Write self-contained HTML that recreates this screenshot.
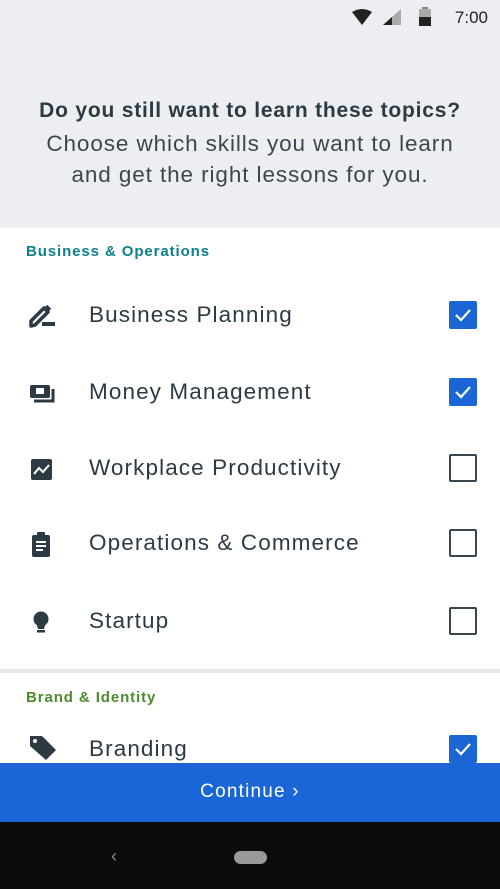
<!DOCTYPE html><html><head><style>
body{margin:0;width:500px;height:889px;overflow:hidden;font-family:"Liberation Sans",sans-serif;background:#fff;position:relative;color:#2c3a42}
.hdr{position:absolute;top:0;left:0;width:500px;height:228px;background:#eceef1}
.time{position:absolute;right:12px;top:8px;font-size:17px;color:#222}
.h1{position:absolute;top:99px;width:100%;text-align:center;font-size:21px;font-weight:bold;letter-spacing:.8px;white-space:nowrap}
.h2{position:absolute;top:128px;width:100%;text-align:center;font-size:22.5px;line-height:31px;color:#3b474e;letter-spacing:.9px;white-space:nowrap}
.sec{position:absolute;left:26px;font-size:15px;font-weight:bold;letter-spacing:.9px}
.row{position:absolute;left:0;width:500px;height:40px}
.row .t{position:absolute;left:89px;top:7px;font-size:22.5px;letter-spacing:1.1px}
.row svg.i{position:absolute;left:28px;top:9px}
.cb{position:absolute;left:449px;top:6px;width:28px;height:28px;box-sizing:border-box;border:2px solid #3a464d;border-radius:2px}
.cb.on{background:#1a66d4;border-color:#1a66d4}
.cb svg{position:absolute;left:2px;top:2px}
.cont{position:absolute;top:763px;left:0;width:500px;height:59px;background:#1b66d6;color:#fff;font-size:19px;text-align:center;line-height:58px;letter-spacing:1.2px}
.nav{position:absolute;top:822px;left:0;width:500px;height:67px;background:#0b0b0b}
</style></head><body>
<div class="hdr">
<svg style="position:absolute;left:352px;top:9px" width="20" height="16"><path d="M0 3Q10-3 20 3L10 16Z" fill="#222"/></svg>
<svg style="position:absolute;left:383px;top:9px" width="18" height="16"><path d="M18 0V16H0Z" fill="#aaa"/><path d="M9 8V16H0Z" fill="#222"/></svg>
<svg style="position:absolute;left:419px;top:7px" width="12" height="19"><rect x="3" y="0" width="6" height="3" fill="#888"/><rect y="2" width="12" height="17" fill="#aaa"/><rect y="10" width="12" height="9" fill="#222"/></svg>
<div class="time">7:00</div>
<div class="h1">Do you still want to learn these topics?</div>
<div class="h2">Choose which skills you want to learn<br>and get the right lessons for you.</div>
</div>
<div class="sec" style="top:243px;color:#0e7f8c">Business &amp; Operations</div>
<div class="row" style="top:295px"><svg class="i" width="28" height="24"><path d="M3 22V17L16 4l4 4L7 21z M18 2l4 4" stroke="#2c3a42" stroke-width="3.5" fill="none" stroke-linejoin="round"/><rect x="14" y="18" width="13" height="4" fill="#2c3a42"/></svg><div class="t">Business Planning</div><div class="cb on"><svg width="20" height="20"><path d="M3 10l5 5 9-10" stroke="#fff" stroke-width="2.2" fill="none"/></svg></div></div>
<div class="row" style="top:372px"><svg class="i" width="28" height="24"><rect x="2" y="4" width="20" height="13" rx="2" fill="#2c3a42"/><rect x="8" y="7" width="8" height="6" fill="#fff"/><path d="M25 8v12H6" stroke="#2c3a42" stroke-width="3" fill="none"/></svg><div class="t">Money Management</div><div class="cb on"><svg width="20" height="20"><path d="M3 10l5 5 9-10" stroke="#fff" stroke-width="2.2" fill="none"/></svg></div></div>
<div class="row" style="top:448px"><svg class="i" width="28" height="24"><rect x="3" y="2" width="21" height="21" rx="2" fill="#2c3a42"/><path d="M6 17l5-6 4 4 6-7" stroke="#fff" stroke-width="2" fill="none"/></svg><div class="t">Workplace Productivity</div><div class="cb"></div></div>
<div class="row" style="top:523px"><svg class="i" width="28" height="26"><rect x="4" y="3" width="18" height="22" rx="2" fill="#2c3a42"/><rect x="9" y="0" width="8" height="5" rx="1" fill="#2c3a42"/><path d="M8 10h10M8 14h10M8 18h7" stroke="#fff" stroke-width="2"/></svg><div class="t">Operations &amp; Commerce</div><div class="cb"></div></div>
<div class="row" style="top:601px"><svg class="i" width="28" height="26"><circle cx="13" cy="9" r="7.5" fill="#2c3a42"/><path d="M8 12h10l-2 7h-6z" fill="#2c3a42"/><rect x="9" y="20" width="8" height="2.5" fill="#2c3a42"/></svg><div class="t">Startup</div><div class="cb"></div></div>
<div style="position:absolute;top:669px;left:0;width:500px;height:4px;background:#e6e9ec"></div>
<div class="sec" style="top:689px;color:#4d8b2d">Brand &amp; Identity</div>
<div class="row" style="top:729px"><svg class="i" width="30" height="28" style="top:5px"><path d="M2 2h12l14 14-10 10L2 12z" fill="#2c3a42"/><circle cx="7" cy="7" r="2" fill="#fff"/></svg><div class="t">Branding</div><div class="cb on"><svg width="20" height="20"><path d="M3 10l5 5 9-10" stroke="#fff" stroke-width="2.2" fill="none"/></svg></div></div>
<div class="cont">Continue ›</div>
<div class="nav"><div style="position:absolute;left:111px;top:24px;color:#888;font-size:18px">‹</div><div style="position:absolute;left:234px;top:29px;width:33px;height:13px;border-radius:7px;background:#999"></div></div>
</body></html>
